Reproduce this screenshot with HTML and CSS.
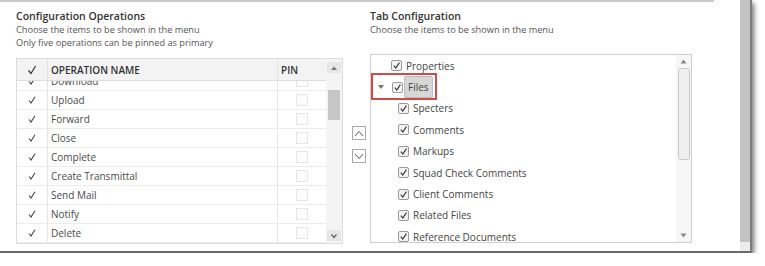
FILE: index.html
```html
<!DOCTYPE html>
<html lang="en">
<head>
    <meta charset="UTF-8">
    <title>Configuration</title>
    <link rel="stylesheet" href="styles.css">
</head>
<body>
    <div class="window">
        <div class="content">
            <section class="ops">
                <h2>Configuration Operations</h2>
                <p class="hint">Choose the items to be shown in the menu<br>Only five operations can be pinned as primary</p>
                <div class="grid">
                    <div class="grid-main">
                        <div class="grid-head">
                            <span class="c-chk"><svg width="10" height="10" viewBox="0 0 10 10"><path d="M1.5 5.5 L4 8.5 L8.5 1" fill="none" stroke="#333" stroke-width="1.2"/></svg></span>
                            <span class="c-name">OPERATION NAME</span>
                            <span class="c-pin">PIN</span>
                        </div>
                        <div class="grid-body">
                            <div class="rows">
                                <div class="row"><span class="c-chk"><i class="tick"></i></span><span class="c-name">Download</span><span class="c-pin"><i class="pin"></i></span></div>
                                <div class="row"><span class="c-chk"><i class="tick"></i></span><span class="c-name">Upload</span><span class="c-pin"><i class="pin"></i></span></div>
                                <div class="row"><span class="c-chk"><i class="tick"></i></span><span class="c-name">Forward</span><span class="c-pin"><i class="pin"></i></span></div>
                                <div class="row"><span class="c-chk"><i class="tick"></i></span><span class="c-name">Close</span><span class="c-pin"><i class="pin"></i></span></div>
                                <div class="row"><span class="c-chk"><i class="tick"></i></span><span class="c-name">Complete</span><span class="c-pin"><i class="pin"></i></span></div>
                                <div class="row"><span class="c-chk"><i class="tick"></i></span><span class="c-name">Create Transmittal</span><span class="c-pin"><i class="pin"></i></span></div>
                                <div class="row"><span class="c-chk"><i class="tick"></i></span><span class="c-name">Send Mail</span><span class="c-pin"><i class="pin"></i></span></div>
                                <div class="row"><span class="c-chk"><i class="tick"></i></span><span class="c-name">Notify</span><span class="c-pin"><i class="pin"></i></span></div>
                                <div class="row"><span class="c-chk"><i class="tick"></i></span><span class="c-name">Delete</span><span class="c-pin"><i class="pin"></i></span></div>
                            </div>
                        </div>
                    </div>
                    <div class="grid-scroll">
                        <span class="sb-btn sb-up"><svg width="8" height="6" viewBox="0 0 8 6"><path d="M1 5 L4 1.5 L7 5 Z" fill="#777"/></svg></span>
                        <span class="sb-thumb"></span>
                        <span class="sb-btn sb-down"><svg width="8" height="6" viewBox="0 0 8 6"><path d="M1.5 1.5 L4 4.5 L6.5 1.5" fill="none" stroke="#666" stroke-width="1.3"/></svg></span>
                    </div>
                </div>
            </section>

            <div class="movers">
                <button class="move"><svg width="10" height="7" viewBox="0 0 10 7"><path d="M1 6 L5 1.5 L9 6" fill="none" stroke="#555" stroke-width="1"/></svg></button>
                <button class="move"><svg width="10" height="7" viewBox="0 0 10 7"><path d="M1 1 L5 5.5 L9 1" fill="none" stroke="#555" stroke-width="1"/></svg></button>
            </div>

            <section class="tabs">
                <h2>Tab Configuration</h2>
                <p class="hint">Choose the items to be shown in the menu</p>
                <div class="tree">
                    <ul class="tree-list">
                        <li class="node"><i class="box"></i><span class="label">Properties</span></li>
                        <li class="node open">
                            <span class="caret"></span><i class="box"></i><span class="label selected">Files</span>
                            <span class="callout"></span>
                        </li>
                        <li class="node child"><i class="box"></i><span class="label">Specters</span></li>
                        <li class="node child"><i class="box"></i><span class="label">Comments</span></li>
                        <li class="node child"><i class="box"></i><span class="label">Markups</span></li>
                        <li class="node child"><i class="box"></i><span class="label">Squad Check Comments</span></li>
                        <li class="node child"><i class="box"></i><span class="label">Client Comments</span></li>
                        <li class="node child"><i class="box"></i><span class="label">Related Files</span></li>
                        <li class="node child"><i class="box"></i><span class="label">Reference Documents</span></li>
                    </ul>
                    <div class="tree-scroll">
                        <span class="ts-arrow"><svg width="7" height="5" viewBox="0 0 7 5"><path d="M0.5 4.5 L3.5 0.5 L6.5 4.5 Z" fill="#888"/></svg></span>
                        <span class="ts-thumb"></span>
                        <span class="ts-arrow ts-down"><svg width="7" height="5" viewBox="0 0 7 5"><path d="M0.5 0.5 L3.5 4.5 L6.5 0.5 Z" fill="#888"/></svg></span>
                    </div>
                </div>
            </section>
        </div>
        <div class="page-scroll"></div>
    </div>
</body>
</html>
```

FILE: styles.css
```css
body {
    margin: 0;
    background: #fff;
    font-family: "Open Sans", "Liberation Sans", sans-serif;
    color: #444;
}
.window {
    display: flex;
    width: 750px;
    height: 251px;
    border-right: 2px solid #7c7c7c;
    border-bottom: 2px solid #6a6a6a;
    box-shadow: 2px 3px 5px rgba(0, 0, 0, 0.55);
}
.content {
    display: flex;
    align-items: flex-start;
    align-self: flex-start;
    width: 714px;
    padding: 7px 0 0 16px;
    border-top: 2px solid #c9c9c9;
}
h2 {
    margin: 0;
    font-size: 10.5px;
    line-height: 15px;
    font-weight: 600;
    color: #333;
}
.hint {
    margin: 0;
    font-size: 9.2px;
    line-height: 12.5px;
    color: #555;
}

/* operations grid */
.ops {
    width: 327px;
}
.grid {
    display: flex;
    margin-top: 9px;
    border: 1px solid #dcdcdc;
}
.grid-main {
    width: 309px;
}
.grid-head,
.row {
    display: grid;
    grid-template-columns: 31px 230px 48px;
}
.grid-head {
    height: 21px;
    background: #f3f3f3;
    border-bottom: 1px solid #dedede;
    font-size: 10px;
    font-weight: 600;
    color: #333;
}
.grid-head span,
.row span {
    display: flex;
    align-items: center;
}
.c-chk {
    justify-content: center;
    border-right: 1px solid #e4e4e4;
}
.c-name {
    padding-left: 3px;
    border-right: 1px solid #e4e4e4;
}
.c-pin {
    padding-left: 3px;
}
.row .c-pin {
    justify-content: center;
    padding-left: 0;
}
.grid-body {
    height: 162px;
    overflow: hidden;
}
.rows {
    margin-top: -9px;
}
.row {
    height: 18px;
    border-bottom: 1px solid #ececec;
    font-size: 10px;
    color: #4a4a4a;
}
.tick {
    width: 8px;
    height: 8px;
    background: url("data:image/svg+xml;utf8,<svg xmlns='http://www.w3.org/2000/svg' viewBox='0 0 8 8'><path d='M1 4.5 L3 7 L7 0.8' fill='none' stroke='%23444' stroke-width='1.1'/></svg>") no-repeat center;
}
.pin {
    width: 10px;
    height: 10px;
    border: 1px solid #e6e6e6;
    background: #fcfcfc;
}
.grid-scroll {
    display: flex;
    flex-direction: column;
    align-items: center;
    width: 16px;
    background: #f4f4f4;
}
.sb-btn {
    display: flex;
    align-items: center;
    justify-content: center;
    width: 14px;
    height: 11px;
    background: #e6e6e6;
}
.sb-up {
    margin-top: 3px;
}
.sb-thumb {
    width: 12px;
    height: 30px;
    margin-top: 17px;
    background: #c6c6c6;
}
.sb-down {
    margin-top: auto;
    margin-bottom: 2px;
}

/* move buttons */
.movers {
    display: flex;
    flex-direction: column;
    gap: 9px;
    width: 18px;
    padding: 117px 0 0 9px;
}
.move {
    display: flex;
    align-items: center;
    justify-content: center;
    width: 14px;
    height: 14px;
    padding: 0;
    border: 1px solid #a9a9a9;
    background: #fff;
}

/* tab tree */
.tabs {
    width: 322px;
}
.tree {
    display: flex;
    height: 187px;
    margin-top: 17.5px;
    border: 1px solid #cfcfcf;
}
.tree-list {
    flex: 1;
    margin: 0;
    padding: 0;
    list-style: none;
    overflow: hidden;
}
.node {
    position: relative;
    display: flex;
    align-items: center;
    height: 21.4px;
    padding-left: 20px;
    font-size: 10px;
    color: #444;
}
.node.child {
    padding-left: 27px;
}
.node.open {
    padding-left: 7px;
}
.caret {
    width: 0;
    height: 0;
    margin-right: 8px;
    border-left: 3px solid transparent;
    border-right: 3px solid transparent;
    border-top: 4px solid #777;
}
.box {
    width: 9px;
    height: 9px;
    border: 1px solid #9a9a9a;
    border-radius: 2px;
    background: #f3f3f3 url("data:image/svg+xml;utf8,<svg xmlns='http://www.w3.org/2000/svg' viewBox='0 0 9 9'><path d='M1.8 4.6 L3.8 7 L7.4 1.6' fill='none' stroke='%23333' stroke-width='1.1'/></svg>") no-repeat center;
}
.label {
    margin-left: 4px;
}
.label.selected {
    margin-left: 1px;
    padding: 3px 3px;
    background: #d7d7d7;
    border: 1px solid #bdbdbd;
    border-radius: 2px;
}
.callout {
    position: absolute;
    left: 0;
    top: -3px;
    width: 62px;
    height: 23px;
    border: 2px solid #d04a4a;
}
.tree-scroll {
    display: flex;
    flex-direction: column;
    align-items: center;
    width: 15px;
    background: #f6f6f6;
}
.ts-arrow {
    display: flex;
    margin-top: 4px;
}
.ts-thumb {
    width: 10px;
    height: 90px;
    margin-top: 4px;
    border: 1px solid #cbcbcb;
    border-radius: 3px;
    background: #efefef;
}
.ts-down {
    margin-top: auto;
    margin-bottom: 4px;
}

.page-scroll {
    width: 10px;
    height: 242px;
    margin-left: 26px;
    background: #c3c3c3;
    border-bottom: 9px solid #ececec;
}
```
